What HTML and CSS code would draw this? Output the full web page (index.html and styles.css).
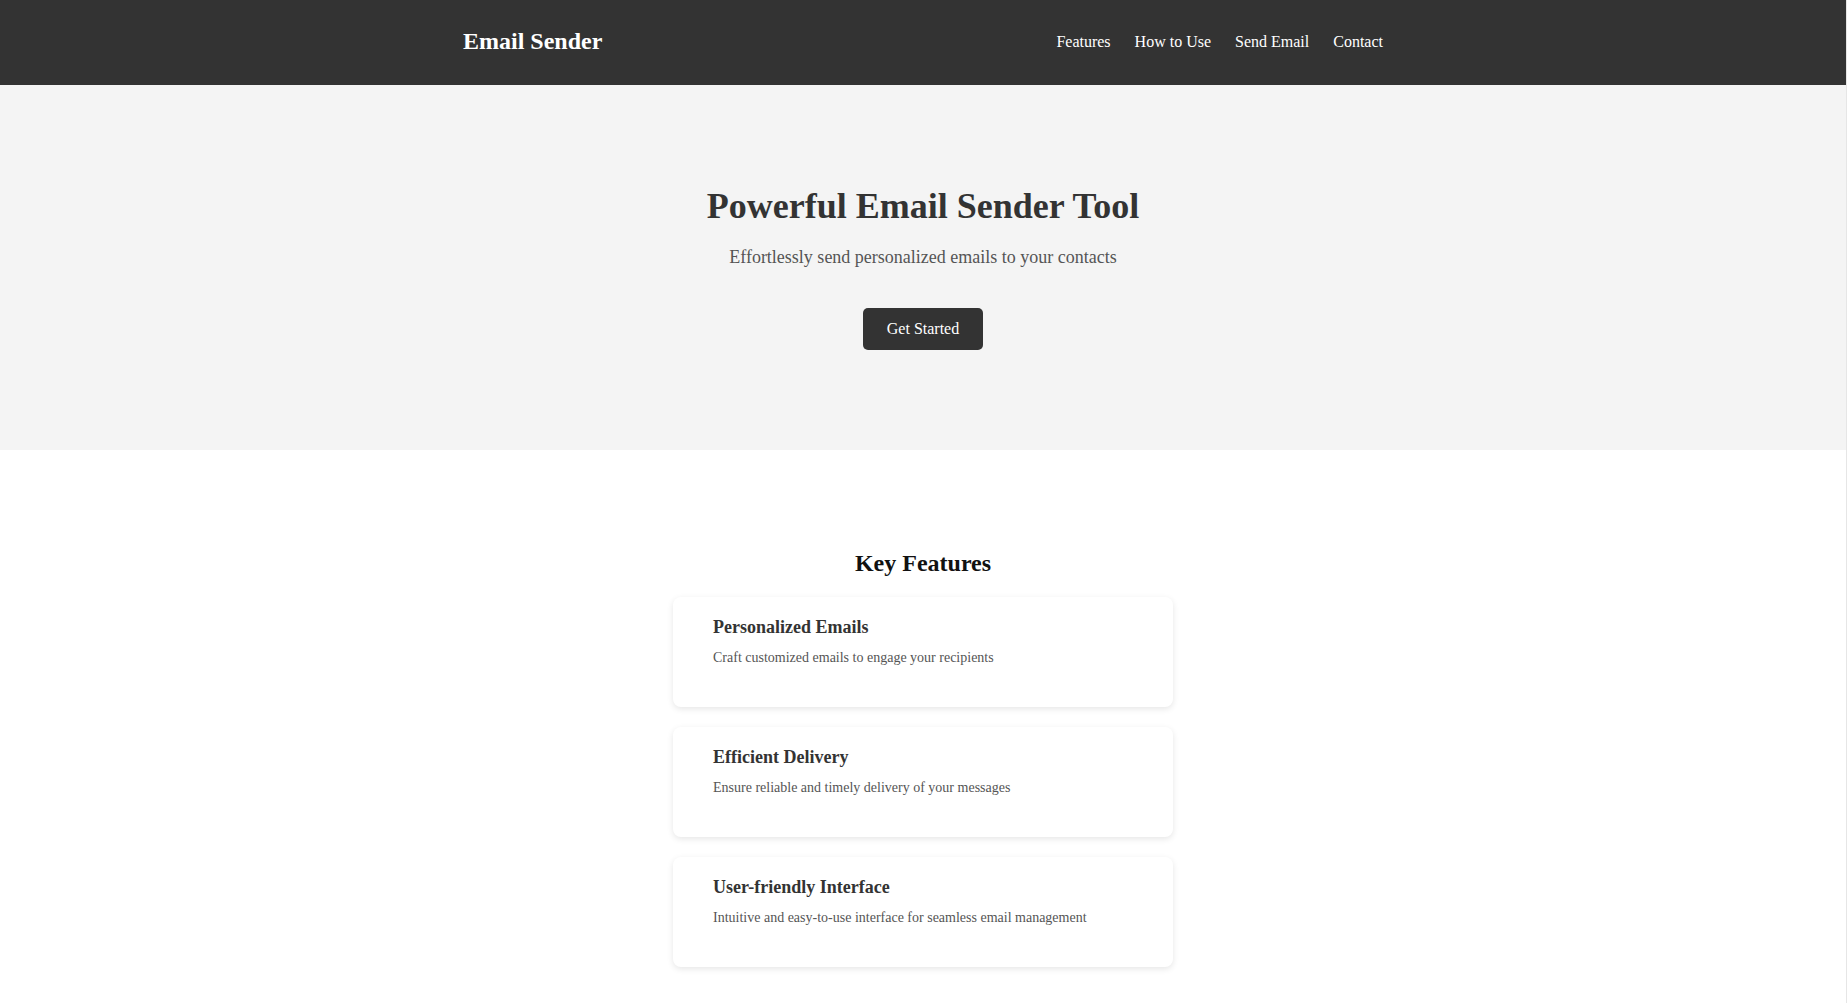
FILE: index.html
```html
<!DOCTYPE html>
<html lang="en">
<head>
<meta charset="UTF-8">
<title>Email Sender</title>
<link rel="stylesheet" href="styles.css">
</head>
<body>
<div class="page">
<header class="site-header">
  <div class="container header-inner">
    <div class="logo">Email Sender</div>
    <nav class="nav">
      <a href="#features">Features</a>
      <a href="#how">How to Use</a>
      <a href="#send">Send Email</a>
      <a href="#contact">Contact</a>
    </nav>
  </div>
</header>
<section class="hero">
  <h1 class="hero-title">Powerful Email Sender Tool</h1>
  <p class="hero-sub">Effortlessly send personalized emails to your contacts</p>
  <a class="btn" href="#send">Get Started</a>
</section>
<section class="features" id="features">
  <h2 class="features-title">Key Features</h2>
  <div class="feature-list">
    <div class="card">
      <h3 class="card-title">Personalized Emails</h3>
      <p class="card-text">Craft customized emails to engage your recipients</p>
    </div>
    <div class="card">
      <h3 class="card-title">Efficient Delivery</h3>
      <p class="card-text">Ensure reliable and timely delivery of your messages</p>
    </div>
    <div class="card">
      <h3 class="card-title">User-friendly Interface</h3>
      <p class="card-text">Intuitive and easy-to-use interface for seamless email management</p>
    </div>
  </div>
</section>
</div>
</body>
</html>
```
FILE: styles.css
```css
* { box-sizing: border-box; }
body {
  margin: 0;
  font-family: "Liberation Serif", "Times New Roman", serif;
  color: #333;
  background: #fff;
}
.page {
  border-right: 1px solid #e6e6e6;
  min-height: 100vh;
}
.container {
  max-width: 960px;
  margin: 0 auto;
  padding: 0 20px;
}
.site-header {
  background: #333;
}
.header-inner {
  height: 85px;
  padding-bottom: 2px;
  display: flex;
  align-items: center;
  justify-content: space-between;
}
.logo {
  color: #fff;
  font-size: 24px;
  font-weight: bold;
}
.nav {
  display: flex;
  gap: 24px;
}
.nav a {
  color: #fff;
  text-decoration: none;
  font-size: 16px;
}
.hero {
  background: #f4f4f4;
  text-align: center;
  padding: 100px 20px;
  height: 365px;
}
.hero-title {
  margin: 0 0 20px;
  font-size: 36px;
  font-weight: bold;
  color: #333;
}
.hero-sub {
  margin: 0 0 40px;
  font-size: 18px;
  color: #555;
}
.btn {
  display: inline-block;
  background: #333;
  color: #fff;
  text-decoration: none;
  font-size: 16px;
  width: 120px;
  height: 42px;
  line-height: 42px;
  border-radius: 5px;
}
.features {
  padding: 100px 20px 40px;
}
.features-title {
  margin: 0 0 20px;
  text-align: center;
  font-size: 24px;
  color: #111;
}
.feature-list {
  width: 500px;
  margin: 0 auto;
  display: flex;
  flex-direction: column;
  gap: 20px;
}
.card {
  background: #fff;
  border-radius: 8px;
  box-shadow: 0 2px 6px rgba(0, 0, 0, 0.1);
  padding: 20px 40px;
  height: 110px;
}
.card-title {
  margin: 0 0 12px;
  font-size: 18px;
  color: #333;
}
.card-text {
  margin: 0;
  font-size: 14px;
  color: #555;
}
```
